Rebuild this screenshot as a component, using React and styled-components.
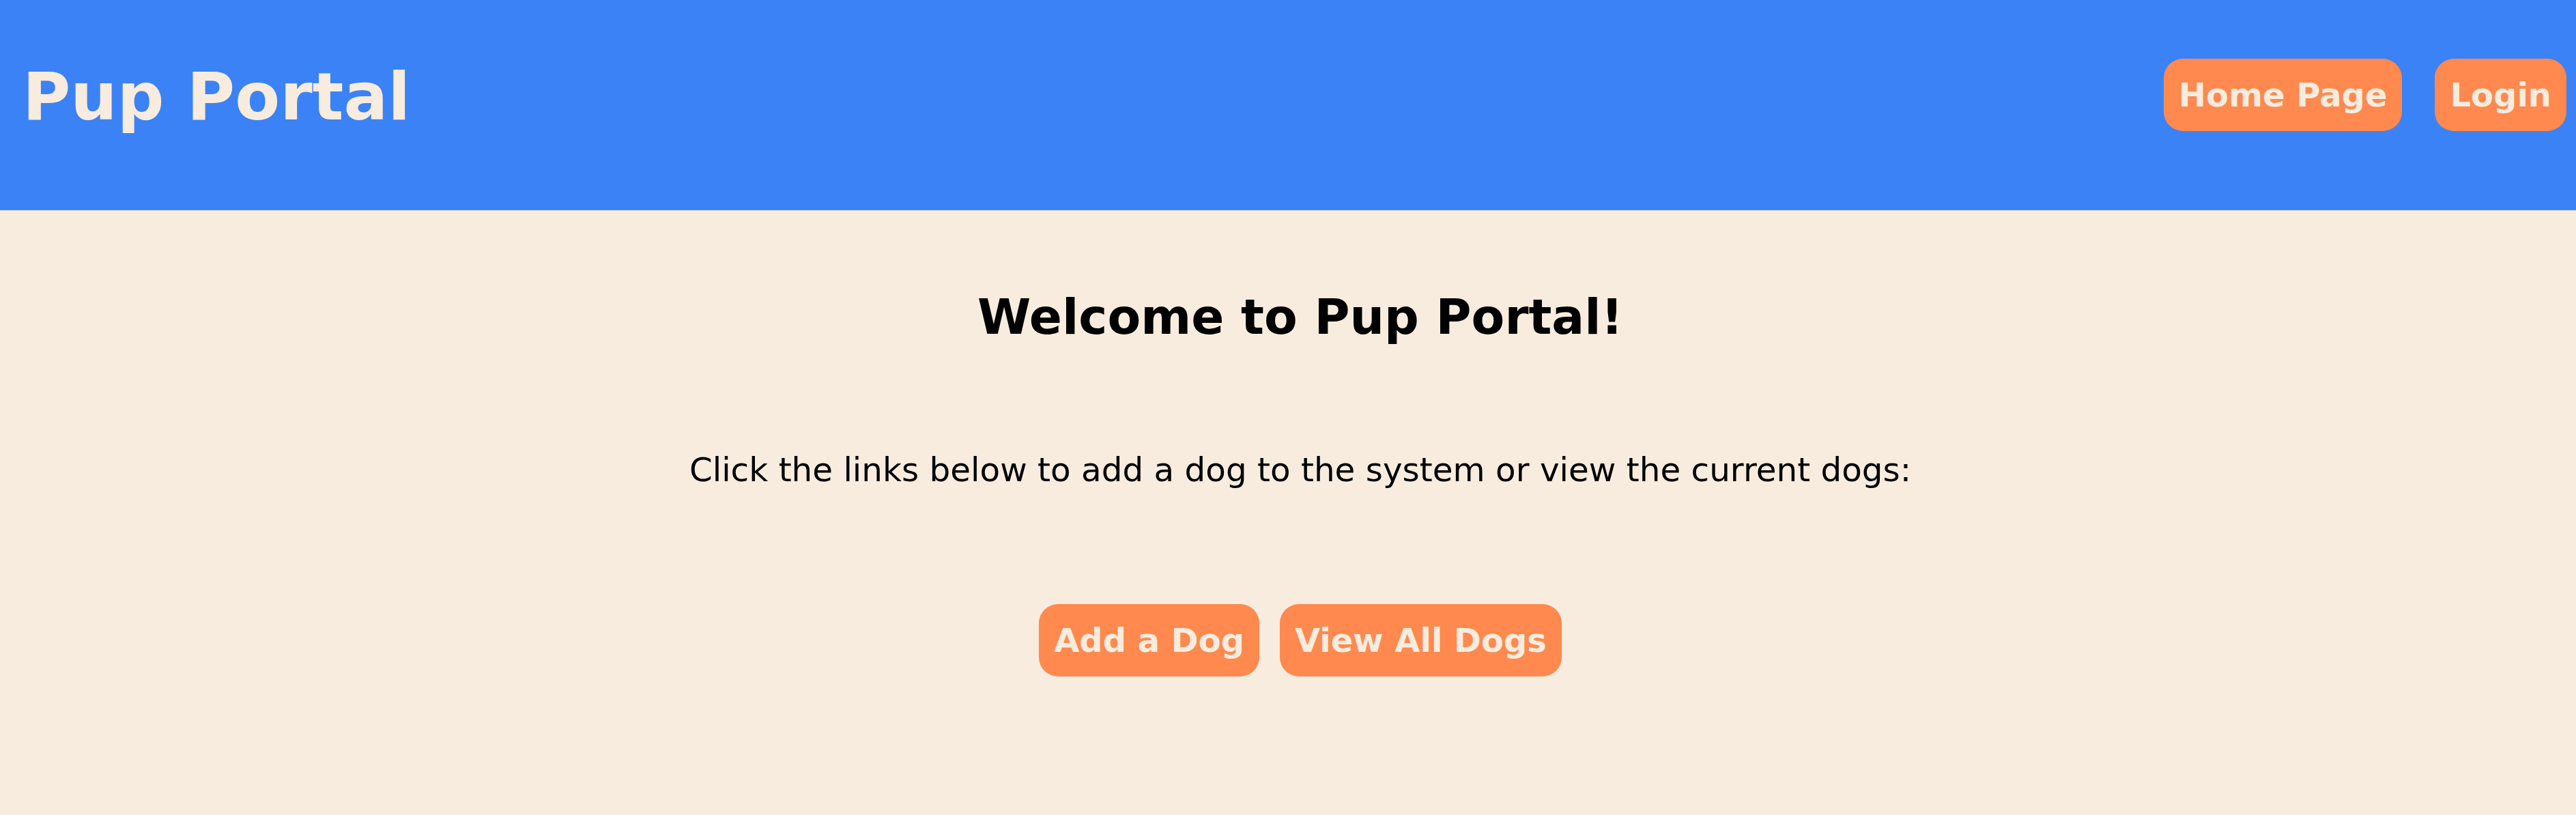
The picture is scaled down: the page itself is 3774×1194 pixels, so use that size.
import React from 'react';
import styled, { createGlobalStyle } from 'styled-components';

const GlobalStyle = createGlobalStyle`
    html, body {
        margin: 0;
        padding: 0;
        background-color: #f8ecdf;
        font-family: "DejaVu Sans", Verdana, sans-serif;
    }
`;

const Header = styled.header`
    box-sizing: border-box;
    height: 308px;
    background-color: #3b82f6;
    display: flex;
    justify-content: space-between;
    align-items: flex-start;
    padding: 86px 14px 0 33px;
`;

const Title = styled.h1`
    margin: 0;
    font-size: 96px;
    font-weight: bold;
    color: #f8ecdf;
`;

const Nav = styled.nav`
    display: flex;
    gap: 48px;
`;

const Button = styled.button`
    border: none;
    background-color: #ff894e;
    color: #f8ecdf;
    font-family: inherit;
    font-weight: bold;
    font-size: 48px;
    line-height: 56px;
    padding: 25px 22px;
    border-radius: 28px;
    cursor: pointer;

    :focus {
        outline: none;
    }
`;

const Main = styled.main`
    display: flex;
    flex-direction: column;
    align-items: center;
    padding: 115px 0 0 36px;
`;

const H2 = styled.h2`
    margin: 0;
    font-size: 71px;
    font-weight: bold;
    color: #000;
`;

const Text = styled.p`
    margin: 154px 0 0;
    font-size: 48.4px;
    color: #000;
`;

const Links = styled.div`
    display: flex;
    gap: 30px;
    margin-top: 169px;
`;

const App = () => {
    return (
        <>
            <GlobalStyle />
            <Header>
                <Title>Pup Portal</Title>
                <Nav>
                    <Button>Home Page</Button>
                    <Button>Login</Button>
                </Nav>
            </Header>
            <Main>
                <H2>Welcome to Pup Portal!</H2>
                <Text>Click the links below to add a dog to the system or view the current dogs:</Text>
                <Links>
                    <Button>Add a Dog</Button>
                    <Button>View All Dogs</Button>
                </Links>
            </Main>
        </>
    );
};

export default App;
